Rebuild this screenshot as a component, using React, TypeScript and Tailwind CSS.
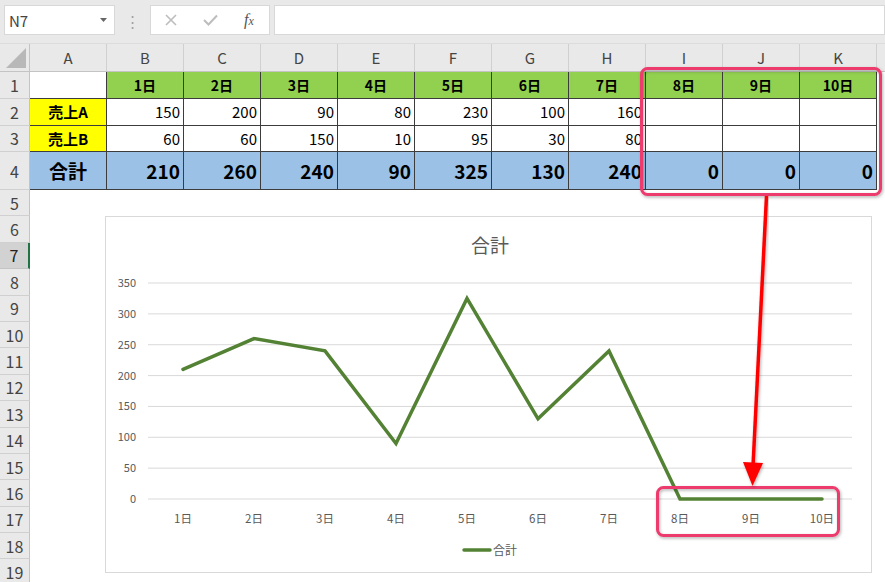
import React from "react";

const COLS = ["A", "B", "C", "D", "E", "F", "G", "H", "I", "J", "K"];
const days = ["1日", "2日", "3日", "4日", "5日", "6日", "7日", "8日", "9日", "10日"];
const salesA: (number | "")[] = [150, 200, 90, 80, 230, 100, 160, "", "", ""];
const salesB: (number | "")[] = [60, 60, 150, 10, 95, 30, 80, "", "", ""];
const totals = [210, 260, 240, 90, 325, 130, 240, 0, 0, 0];

const gridCols = "grid grid-cols-[30px_repeat(11,77px)_1fr]";

const RowHeader: React.FC<{ n: number; selected?: boolean }> = ({ n, selected }) => (
  <div
    className={
      selected
        ? "flex items-center justify-center bg-[#d2d2d2] text-[#222] border-b border-[#c4c4c4] border-r-2 border-r-[#217346] text-[16px]"
        : "flex items-center justify-center bg-[#e9e9e9] text-[#444] border-b border-[#d0d0d0] border-r border-r-[#c4c4c4] text-[16px]"
    }
  >
    {n}
  </div>
);

const cellBorder = "border-r border-b border-[#3c3c3c]";

const ChartBox: React.FC = () => {
  const y = (v: number) => 282 - v * 0.6171;
  const x = (i: number) => 77 + i * 71;
  const points = totals.map((v, i) => `${x(i)},${y(v)}`).join(" ");
  const ticks = [350, 300, 250, 200, 150, 100, 50, 0];
  return (
    <div className="absolute left-[105px] top-[216px] w-[767px] h-[357px] bg-white border border-[#d9d9d9]">
      <svg width="767" height="357" className="block">
        <text x="384" y="36" textAnchor="middle" fontSize="19" fill="#595959">
          合計
        </text>
        {ticks.map((t) => (
          <g key={t}>
            <line x1="42" x2="746" y1={y(t)} y2={y(t)} stroke="#d9d9d9" strokeWidth="1" />
            <text x="30" y={y(t) + 4} textAnchor="end" fontSize="11" fill="#595959">
              {t}
            </text>
          </g>
        ))}
        {days.map((d, i) => (
          <text key={d} x={x(i)} y="306" textAnchor="middle" fontSize="11.5" fill="#595959">
            {d}
          </text>
        ))}
        <polyline
          points={points}
          fill="none"
          stroke="#548235"
          strokeWidth="3.5"
          strokeLinecap="round"
          strokeLinejoin="miter"
        />
        <line x1="358" x2="384" y1="333" y2="333" stroke="#548235" strokeWidth="3.5" strokeLinecap="round" />
        <text x="387" y="337.5" fontSize="12" fill="#595959">
          合計
        </text>
      </svg>
    </div>
  );
};

const Overlay: React.FC = () => (
  <svg className="absolute left-0 top-0 pointer-events-none" width="885" height="582">
    <defs>
      <filter id="sh" x="-10%" y="-10%" width="120%" height="120%">
        <feDropShadow dx="1" dy="1.5" stdDeviation="1.5" floodColor="#000" floodOpacity="0.3" />
      </filter>
    </defs>
    <rect x="641.5" y="68.5" width="239" height="126" rx="6" fill="none" stroke="#ec3b6c" strokeWidth="3" filter="url(#sh)" />
    <rect x="657.5" y="487.5" width="181" height="48" rx="6" fill="none" stroke="#ec3b6c" strokeWidth="3" filter="url(#sh)" />
    <g filter="url(#sh)">
      <line x1="766.5" y1="196" x2="753" y2="466" stroke="#ff0000" strokeWidth="3.5" />
      <polygon points="743,462 763,463 752.5,486" fill="#ff0000" />
    </g>
  </svg>
);

export default function App() {
  return (
    <div className="relative w-[885px] h-[582px] overflow-hidden bg-white font-['Noto_Sans_CJK_JP',sans-serif] leading-none">
      {/* toolbar */}
      <div className="h-[44px] bg-[#e9e9e9] flex items-start pt-[5px] pl-[4px] border-b border-[#dcdcdc]">
        <div className="w-[111px] h-[30px] bg-white border border-[#d8d8d8] flex items-center justify-between pl-[4px] pr-[7px]">
          <span className="text-[15px] text-[#444]">N7</span>
          <svg width="7" height="4">
            <polygon points="0,0 7,0 3.5,4" fill="#666" />
          </svg>
        </div>
        <div className="w-[35px] h-[30px] flex items-center justify-center text-[#a0a0a0] text-[15px]">⋮</div>
        <div className="w-[120px] h-[30px] bg-white border border-[#d8d8d8] flex items-center">
          <div className="w-[40px] flex justify-center">
            <svg width="12" height="12">
              <path d="M1 1 L11 11 M11 1 L1 11" stroke="#bdbdbd" strokeWidth="1.6" />
            </svg>
          </div>
          <div className="w-[38px] flex justify-center">
            <svg width="15" height="12">
              <path d="M1 6 L5.5 10.5 L14 1.5" stroke="#bdbdbd" strokeWidth="2" fill="none" />
            </svg>
          </div>
          <div className="w-[40px] flex justify-center">
            <span className="font-['Liberation_Serif',serif] italic text-[16px] text-[#555]">
              f<span className="text-[12px]">x</span>
            </span>
          </div>
        </div>
        <div className="flex-1 h-[30px] ml-[4px] bg-white border border-[#d8d8d8]" />
      </div>

      {/* column headers */}
      <div className={`${gridCols} h-[28px] bg-[#e9e9e9] border-b border-[#c4c4c4]`}>
        <div className="relative border-r border-[#c4c4c4]">
          <svg className="absolute right-[3px] bottom-[3px]" width="20" height="20">
            <polygon points="20,0 20,20 0,20" fill="#b8b8b8" />
          </svg>
        </div>
        {COLS.map((c) => (
          <div key={c} className="flex items-center justify-center text-[15px] text-[#444] border-r border-[#d0d0d0]">
            {c}
          </div>
        ))}
        <div />
      </div>

      {/* row 1 */}
      <div className={`${gridCols} h-[27px]`}>
        <RowHeader n={1} />
        <div className={`bg-white ${cellBorder}`} />
        {days.map((d) => (
          <div key={d} className={`bg-[#92d050] ${cellBorder} flex items-center justify-center text-[14px] font-bold text-black`}>
            {d}
          </div>
        ))}
        <div />
      </div>

      {/* rows 2-3 */}
      {[
        { n: 2, label: "売上A", vals: salesA },
        { n: 3, label: "売上B", vals: salesB },
      ].map((r) => (
        <div key={r.n} className={`${gridCols} h-[26.5px]`}>
          <RowHeader n={r.n} />
          <div className={`bg-[#ffff00] ${cellBorder} flex items-center justify-center text-[15px] font-bold text-black`}>
            {r.label}
          </div>
          {r.vals.map((v, i) => (
            <div key={i} className={`bg-white ${cellBorder} flex items-center justify-end pr-[3px] text-[15px] text-black`}>
              {v}
            </div>
          ))}
          <div />
        </div>
      ))}

      {/* row 4 */}
      <div className={`${gridCols} h-[38px]`}>
        <RowHeader n={4} />
        <div className={`bg-[#9bc2e6] ${cellBorder} flex items-center justify-center text-[19px] font-bold text-black`}>
          合計
        </div>
        {totals.map((v, i) => (
          <div key={i} className={`bg-[#9bc2e6] ${cellBorder} flex items-center justify-end pr-[3px] text-[19px] font-bold text-black`}>
            {v}
          </div>
        ))}
        <div />
      </div>

      {/* rows 5-19 */}
      {Array.from({ length: 15 }, (_, k) => k + 5).map((n) => (
        <div key={n} className={`${gridCols} h-[26.4px]`}>
          <RowHeader n={n} selected={n === 7} />
          <div className="col-span-12 bg-white" />
        </div>
      ))}

      <ChartBox />
      <Overlay />
    </div>
  );
}
